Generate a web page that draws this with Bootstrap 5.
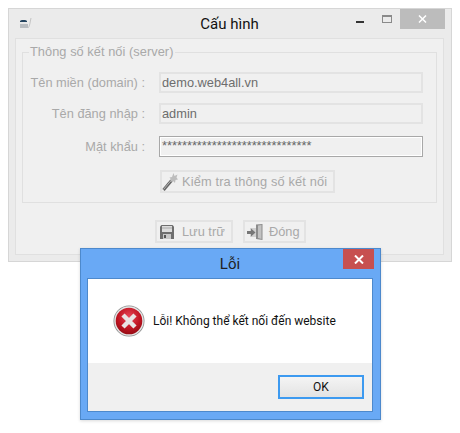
<!DOCTYPE html>
<html lang="vi">
<head>
  <meta charset="UTF-8">
  <meta name="viewport" content="width=device-width, initial-scale=1.0">
  <title>Cấu hình</title>
  <link href="https://cdn.jsdelivr.net/npm/bootstrap@5.3.3/dist/css/bootstrap.min.css" rel="stylesheet">
  <style>
    body { background: #fff; width: 460px; height: 433px; overflow: hidden; position: relative; }
    .cfg-win { width: 444px; height: 254px; margin: 8px 0 0 8px; background: #ebebeb; border: 1px solid #d6d6d6; padding: 0 7px 6px 6px; }
    .cfg-title { height: 29px; padding-top: 6px; font: 15px Roboto, sans-serif; color: #111; position: relative; }
    .cfg-appicon { position: absolute; left: 4px; top: 7px; }
    .cfg-min { position: absolute; left: 341px; top: 12px; width: 8px; height: 2px; background: #333; }
    .cfg-max { position: absolute; left: 367px; top: 6px; width: 10px; height: 8px; border: 1px solid #8a8a8a; border-top-width: 2px; }
    .cfg-close { position: absolute; left: 385px; top: 0; width: 45px; height: 20px; background: #bcbcbc; color: #fff; }
    .cfg-body { height: 217px; background: #f0f0f0; border: 1px solid #e0e0e0; padding: 0 6px; }
    .cfg-set { border: 1px solid #e0e0e0; height: 159px; margin-top: 5px; padding: 0 13px 0 6px; }
    .cfg-set legend { float: none; width: auto; font: 12.8px "Liberation Sans", sans-serif; color: #a9a9a9; margin: 0; padding: 0 1px; line-height: 16px; letter-spacing: .05px; }
    .cfg-row { height: 21px; margin-bottom: 10px; }
    .cfg-first { margin-top: 12px; }
    .cfg-row.cfg-pass { margin-top: 12px; }
    .cfg-label { flex: 0 0 130px; text-align: right; font: 12.8px "Liberation Sans", sans-serif; color: #a9a9a9; padding-right: 14px; white-space: nowrap; }
    .cfg-input { flex: 0 0 264px; height: 21px; background: #f0f0f0; border: 2px solid #e3e3e3; border-radius: 0; padding: 0 1px; font: 12.8px "Liberation Sans", sans-serif; color: #6d6d6d; line-height: 17px; }
    .cfg-pass .cfg-input { border: 1px solid #a8a8a8; box-shadow: inset 0 0 0 1px #fff; padding: 0 2px; line-height: 18px; color: #666; }
    .cfg-btn { height: 23px; border: 2px solid #e3e3e3; border-radius: 0; background: #f0f0f0; padding: 0; font: 12.8px "Liberation Sans", sans-serif; color: #a9a9a9; white-space: nowrap; }
    .cfg-btn:disabled { color: #a9a9a9; background: #f0f0f0; border-color: #e3e3e3; opacity: 1; }
    .cfg-btn svg { flex-shrink: 0; }
    .cfg-test { width: 175px; margin: 13px 0 0 131px; gap: 4px; letter-spacing: .15px; }
    .cfg-foot { margin: 17px 0 0 133px; gap: 10px; }
    .cfg-save { width: 78px; padding-left: 2px; gap: 7px; }
    .cfg-exit { width: 63px; padding-left: 2px; gap: 6px; }
    .err-dlg { position: absolute; left: 80px; top: 248px; width: 301px; height: 172px; background: #69a9f5; border: 1px solid #4d89cc; padding: 0 7px 7px 6px; box-shadow: 0 1px 3px rgba(0,0,0,.15); }
    .err-title { height: 29px; padding-top: 6px; font: 15px Roboto, sans-serif; color: #222; position: relative; }
    .err-close { position: absolute; right: -1px; top: 0; width: 31px; height: 20px; background: #c75050; color: #fff; }
    .err-inner { height: 134px; border: 1px solid #4d89cc; background: #f0f0f0; }
    .err-msg { height: 84px; background: #fff; padding-left: 25px; font: 12px Roboto, sans-serif; color: #111; }
    .err-foot { height: 49px; padding: 12px 8px 0 0; }
    .err-ok { width: 86px; height: 24px; border: 2px solid #3d9af0; border-radius: 0; background: linear-gradient(#f4f4f4, #e3e3e3); padding: 0; font: 12px Roboto, sans-serif; color: #111; }
  </style>
</head>
<body>
  <div class="cfg-win">
    <div class="cfg-title text-center">
      <svg class="cfg-appicon" width="14" height="14" viewBox="0 0 14 14">
        <path d="M1 5c0-1.500 7-1.500 7 0v1H1z" fill="#24445f"/>
        <rect x="1" y="6" width="7" height="2" fill="#e8e8e8"/>
        <rect x="1" y="8" width="8" height="4" fill="#b8bcc0"/>
        <path d="M9 12c2-2 2-6 3-10" fill="none" stroke="#c4c4c4" stroke-width="1"/>
      </svg>
      Cấu hình
      <span class="cfg-min"></span>
      <span class="cfg-max"></span>
      <span class="cfg-close d-flex align-items-center justify-content-center">
        <svg width="9" height="8" viewBox="0 0 9 8"><path d="M1 0.500 8 7.500M8 0.500 1 7.500" stroke="#fff" stroke-width="1.500"/></svg>
      </span>
    </div>
    <div class="cfg-body">
      <fieldset class="cfg-set">
        <legend>Thông số kết nối (server)</legend>
        <div class="cfg-row cfg-first d-flex align-items-center">
          <div class="cfg-label">Tên miền (domain) :</div>
          <div class="cfg-input">demo.web4all.vn</div>
        </div>
        <div class="cfg-row d-flex align-items-center">
          <div class="cfg-label">Tên đăng nhập :</div>
          <div class="cfg-input">admin</div>
        </div>
        <div class="cfg-row cfg-pass d-flex align-items-center">
          <div class="cfg-label">Mật khẩu :</div>
          <div class="cfg-input">******************************</div>
        </div>
        <button type="button" class="btn cfg-btn cfg-test d-flex align-items-center" disabled>
          <svg width="16" height="18" viewBox="0 0 16 18">
            <path d="M1.500 17 9.500 7.500" stroke="#666" stroke-width="3"/>
            <path d="M1.500 16.500 9.500 7" stroke="#b5b5b5" stroke-width="1"/>
            <path d="M11.500 0 12.500 3 15.500 1.500 14.500 4.500 16 6.500 13.500 7 13 10 11 8 8.500 9 9 6.500 7.500 4.500 10 4z" fill="#bdbdbd"/>
          </svg>
          <span>Kiểm tra thông số kết nối</span>
        </button>
      </fieldset>
      <div class="cfg-foot d-flex">
        <button type="button" class="btn cfg-btn cfg-save d-flex align-items-center" disabled>
          <svg width="16" height="16" viewBox="0 0 16 16">
            <path d="M1 2.500 2.500 1h11L15 2.500V15H1z" fill="#6e6e6e"/>
            <rect x="3" y="2" width="10" height="6" fill="#dcdcdc"/>
            <rect x="3" y="3.500" width="10" height="1" fill="#a8a8a8"/>
            <rect x="4" y="10" width="8" height="5" fill="#c8c8c8"/>
            <rect x="5" y="11" width="2" height="3" fill="#555"/>
          </svg>
          <span>Lưu trữ</span>
        </button>
        <button type="button" class="btn cfg-btn cfg-exit d-flex align-items-center" disabled>
          <svg width="16" height="16" viewBox="0 0 16 16">
            <path d="M9 0.500 15.500 0V16L9 15z" fill="#8c8c8c"/>
            <path d="M11 1.500 14.500 1V15L11 14z" fill="#c2c2c2"/>
            <path d="M3 4h6v9H3z" fill="#d0d0d0"/>
            <path d="M0 7h4V4.500L8.500 8.500 4 12.500V10H0z" fill="#777"/>
          </svg>
          <span>Đóng</span>
        </button>
      </div>
    </div>
  </div>

  <div class="err-dlg">
    <div class="err-title text-center">
      Lỗi
      <span class="err-close d-flex align-items-center justify-content-center">
        <svg width="10" height="9" viewBox="0 0 10 9"><path d="M1 0.500 9 8.500M9 0.500 1 8.500" stroke="#fff" stroke-width="2"/></svg>
      </span>
    </div>
    <div class="err-inner">
      <div class="err-msg d-flex align-items-center gap-2">
        <svg width="32" height="32" viewBox="0 0 32 32">
          <defs>
            <radialGradient id="redBall" cx="50%" cy="35%" r="70%">
              <stop offset="0" stop-color="#e8495a"/>
              <stop offset=".6" stop-color="#c01421"/>
              <stop offset="1" stop-color="#8e0a12"/>
            </radialGradient>
          </defs>
          <circle cx="16" cy="16" r="15.500" fill="#8d8d8d"/>
          <circle cx="16" cy="16" r="14.700" fill="#e6e6e6"/>
          <circle cx="16" cy="16" r="13.300" fill="url(#redBall)"/>
          <path d="M10 10 22 22M22 10 10 22" stroke="#e9e4e4" stroke-width="4.500"/>
        </svg>
        <span>Lỗi! Không thể kết nối đến website</span>
      </div>
      <div class="err-foot d-flex justify-content-end">
        <button type="button" class="btn err-ok">OK</button>
      </div>
    </div>
  </div>
  <script src="https://cdn.jsdelivr.net/npm/bootstrap@5.3.3/dist/js/bootstrap.bundle.min.js"></script>
</body>
</html>
